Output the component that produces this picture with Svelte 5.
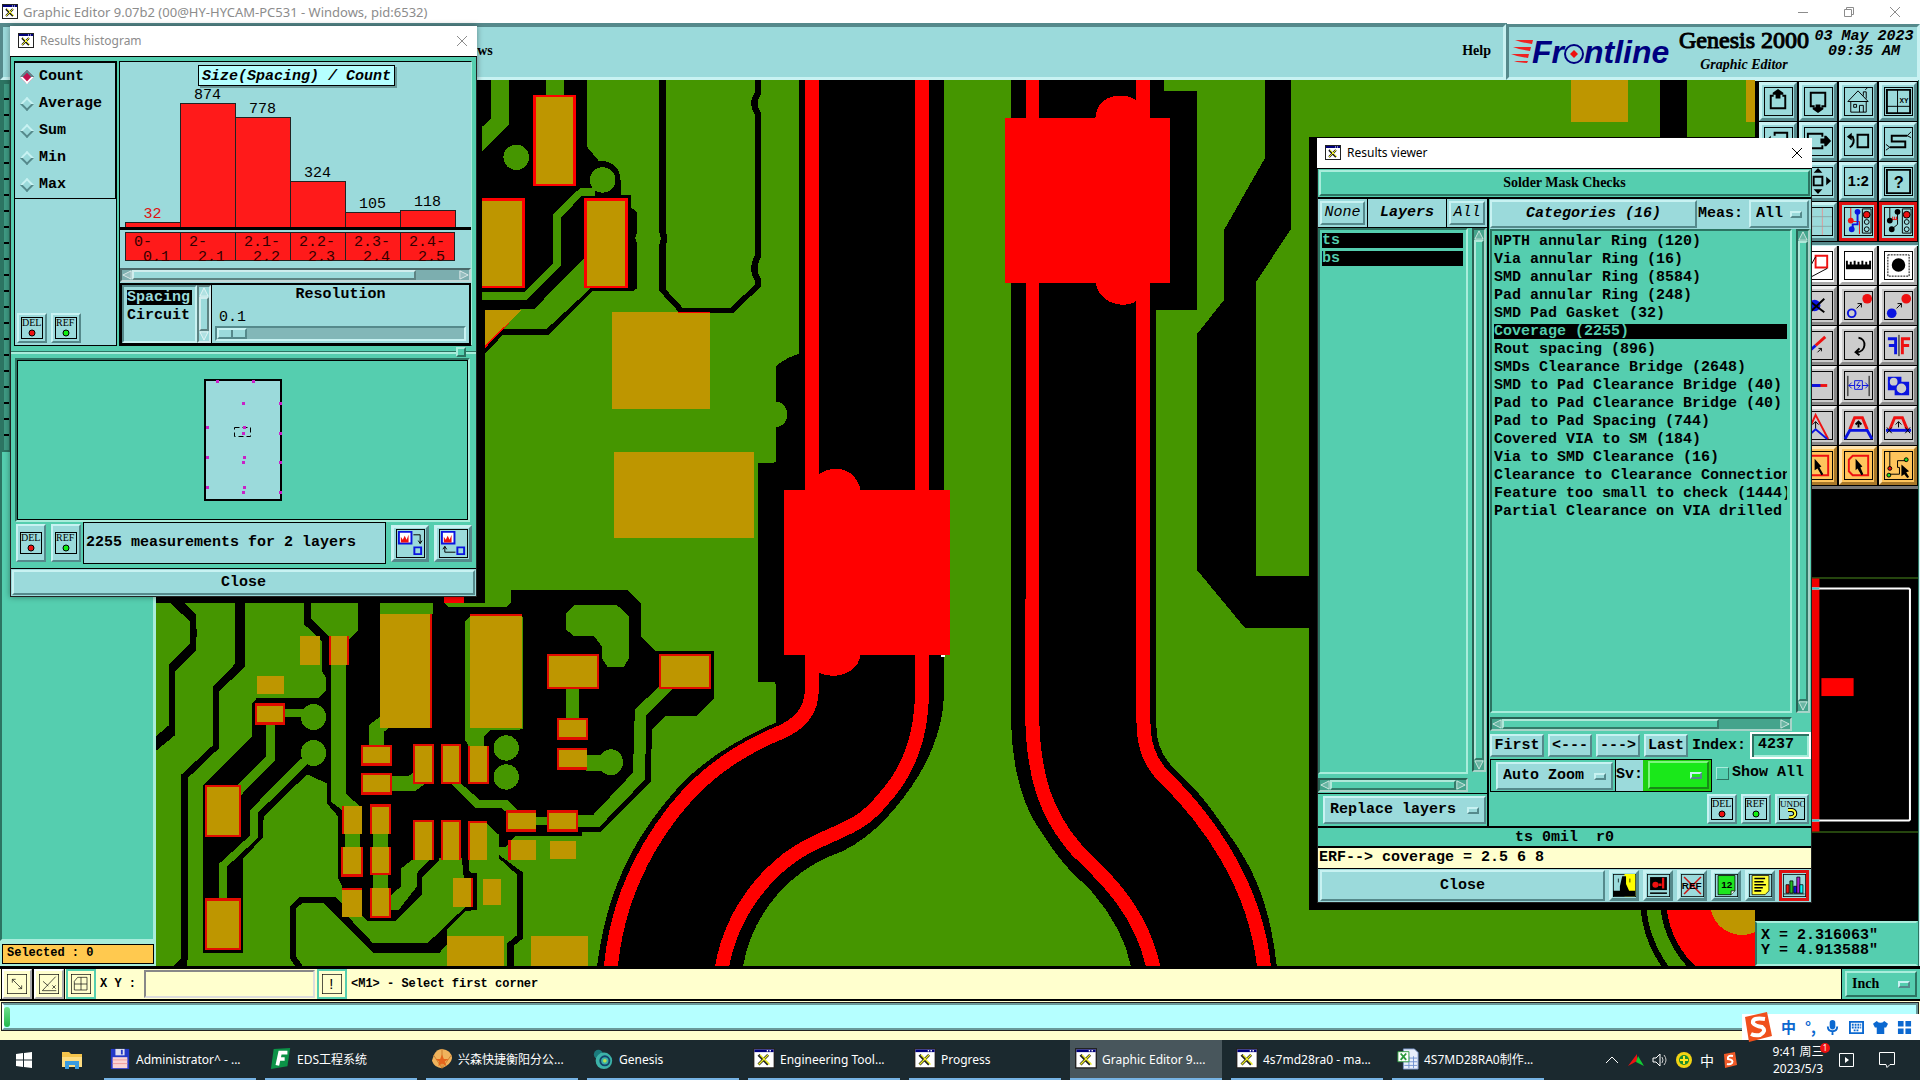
<script lang="ts">
   let mode = "Count";
   let layer = "ts";
   let category = "Coverage (2255)";
   let param = "Spacing";
   let index = "4237";
   let coords = "";
   let show_all = false;
   let resolution = 0;

   const modes = ["Count", "Average", "Sum", "Min", "Max"];
   const params = ["Spacing", "Circuit"];
   const layers = ["ts", "bs"];

   const bins = [
      { from: "0-", to: "0.1", count: 32 },
      { from: "2-", to: "2.1", count: 874 },
      { from: "2.1-", to: "2.2", count: 778 },
      { from: "2.2-", to: "2.3", count: 324 },
      { from: "2.3-", to: "2.4", count: 105 },
      { from: "2.4-", to: "2.5", count: 118 }
   ];

   const categories = [
      "NPTH annular Ring (120)",
      "Via annular Ring (16)",
      "SMD annular Ring (8584)",
      "Pad annular Ring (248)",
      "SMD Pad Gasket (32)",
      "Coverage (2255)",
      "Rout spacing (896)",
      "SMDs Clearance Bridge (2648)",
      "SMD to Pad Clearance Bridge (40)",
      "Pad to Pad Clearance Bridge (40)",
      "Pad to Pad Spacing (744)",
      "Covered VIA to SM (184)",
      "Via to SMD Clearance (16)",
      "Clearance to Clearance Connection",
      "Feature too small to check (1444)",
      "Partial Clearance on VIA drilled"
   ];

   // measurement marks on the board overview
   const marks = [
      [12, 1], [48, 1], [38, 23], [75, 23], [2, 47], [39, 47], [38, 53], [75, 53],
      [2, 77], [39, 77], [38, 82], [75, 82], [2, 107], [39, 107], [38, 112], [75, 112]
   ];

   // x, y, width, height, sides with exposed copper
   const lower_pads: [number, number, number, number, string][] = [
      [392, 138, 52, 86, ""], [467, 138, 53, 86, "rl"], [280, 258, 70, 54, ""],
      [274, 340, 79, 64, "trbl"], [601, 72, 136, 342, "r"], [835, 72, 138, 342, "t"],
      [1037, 192, 136, 105, "trbl"], [1330, 192, 136, 105, "trbl"],
      [1064, 384, 81, 65, "trbl"], [1064, 474, 78, 65, "tbl"],
      [143, 585, 95, 156, "trbl"], [143, 925, 95, 156, "trbl"],
      [551, 465, 81, 62, "trbl"], [551, 549, 81, 65, "trbl"],
      [687, 462, 55, 121, "trbl"], [760, 462, 53, 121, "trbl"], [831, 468, 55, 115, "rbl"],
      [502, 648, 51, 83, "l"], [575, 643, 56, 88, "trl"],
      [499, 771, 58, 89, "rbl"], [575, 771, 56, 84, "rbl"],
      [502, 893, 51, 87, "t"], [575, 893, 56, 91, "rbl"],
      [687, 690, 55, 120, "trl"], [760, 690, 53, 120, "trl"], [831, 693, 50, 117, "tl"],
      [930, 661, 79, 64, "tbl"], [1037, 661, 82, 64, "trbl"],
      [936, 750, 73, 60, "l"], [1045, 753, 68, 54, ""],
      [792, 864, 52, 87, "r"], [870, 867, 47, 78, ""],
      [776, 1038, 149, 92, ""], [996, 1038, 149, 92, ""]
   ];
   const upper_pads: [number, number, number, number, string][] = [
      [115, 45, 94, 273, "trbl"], [5, 355, 93, 269, "trb"], [226, 355, 96, 269, "trbl"],
      [287, 696, 214, 290, ""], [292, 1116, 305, 258, ""]
   ];

   function inner(pad: [number, number, number, number, string]) {
      const [x, y, w, h, s] = pad;
      const l = s.includes("l") ? 6 : 0;
      const r = s.includes("r") ? 6 : 0;
      const t = s.includes("t") ? 7 : 0;
      const b = s.includes("b") ? 7 : 0;
      return { x: x + l, y: y + t, width: w - l - r, height: h - t - b };
   }

   const K = "#000";
   const R = "#e11";
   const B = "#0a14e0";
   // every part: path, stroke, fill, stroke width
   type Part = [string, string, string, number];
   type Icon = { parts: Part[]; text?: string; x?: number; y?: number; size?: number };

   const icons: Record<string, Icon> = {
      up: { parts: [["M10 9H7V22H22V9H19", K, "none", 2], ["M14.500 2L20 6V8H17V12H12V8H9V6Z", K, K, 0]] },
      down: { parts: [["M11 20H7V6H22V20H18", K, "none", 2], ["M14.500 27L20 23V21H17V18H12V21H9V23Z", K, K, 0]] },
      left: { parts: [["M11 9V6H24V22H11V19", K, "none", 2], ["M2 14L7 9V12H11V17H7V19Z", K, K, 0]] },
      right: { parts: [["M19 10V7H4V22H19V19", K, "none", 2], ["M28 14.500L23 9H21V12H17V17H21V20H23Z", K, K, 0]] },
      home: { parts: [["M4 15L14.500 4L25 15H4M7 15V26H23V15M16 26V19H20V26M10 18H13V21H10ZM20 9V5H23V12M22 3L24 1", K, "none", 1]] },
      layout: { parts: [["M3 3H27V27H3Z", K, "none", 2], ["M14 3V27M3 20H27", K, "none", 1]], text: "XY", x: 16, y: 17, size: 7 },
      turn: { parts: [["M14 8H25V21H14Z", K, "none", 2], ["M6 21Q12 17 9 10L5 10", K, "none", 2], ["M3 10L8 6V14Z", K, K, 0]] },
      snake: { parts: [["M24 9L28 5M24 9L28 11M6 21L2 18M6 21L2 24", K, "none", 1], ["M24 9H8V15H22V21H6", K, "none", 2]] },
      fit: { parts: [["M10 10H19V19H10Z", K, "none", 2], ["M14.500 1L19 6H10ZM14.500 28L19 23H10ZM28 14.500L23 10V19ZM1 14.500L6 10V19Z", K, K, 0]] },
      scale: { parts: [], text: "1:2", x: 4, y: 20, size: 15 },
      help: { parts: [["M3 3H27V27H3Z", K, "none", 2]], text: "?", x: 10, y: 22, size: 17 },
      grid: { parts: [["M8 1V29M19 1V29", "#d99", "none", 1], ["M1 10H29M1 20H29", "#8aa", "none", 1]] },
      lights: {
         parts: [
            ["M7 1V13M7 15H16V28", R, "none", 1], ["M14 6V18H9V23", B, "none", 2],
            ["M4 14a3 3 0 1 0 6 0a3 3 0 1 0 -6 0", R, R, 0], ["M11 5a3 3 0 1 0 6 0a3 3 0 1 0 -6 0M5 23a3 3 0 1 0 6 0a3 3 0 1 0 -6 0", B, B, 0],
            ["M19 2H28V27H19ZM21 15.500a2.500 2.500 0 1 0 5 0a2.500 2.500 0 1 0 -5 0M21 23a2.500 2.500 0 1 0 5 0a2.500 2.500 0 1 0 -5 0", K, "none", 1],
            ["M20 8a3.500 3.500 0 1 0 7 0a3.500 3.500 0 1 0 -7 0", K, R, 1]
         ]
      },
      gauge: {
         parts: [
            ["M6 1V13M14 6V18L8 23", K, "none", 1], ["M9 13V10M11 13V10M13 13V10M8 13H14", R, "none", 1],
            ["M3 14a3 3 0 1 0 6 0a3 3 0 1 0 -6 0M11 5a3 3 0 1 0 6 0a3 3 0 1 0 -6 0M5 23a3 3 0 1 0 6 0a3 3 0 1 0 -6 0", K, K, 0],
            ["M19 2H28V27H19ZM21 15.500a2.500 2.500 0 1 0 5 0a2.500 2.500 0 1 0 -5 0M21 23a2.500 2.500 0 1 0 5 0a2.500 2.500 0 1 0 -5 0", K, "none", 1],
            ["M20 8a3.500 3.500 0 1 0 7 0a3.500 3.500 0 1 0 -7 0", K, R, 1]
         ]
      },
      corner: { parts: [["M12 5H24V17H12Z", R, "none", 2], ["M1 17L6 24V28H2", B, B, 1], ["M7 27L24 18M7 15L12 6", K, "none", 1]] },
      ruler: { parts: [["M2 19V10H4V14H6V11H8V14H10V10H12V14H14V11H16V14H18V10H20V14H22V11H24V14H26V10H28V19Z", K, K, 0]] },
      dot: { parts: [["M8 14.500a7 7 0 1 0 14 0a7 7 0 1 0 -14 0", K, K, 0], ["M4 4H26V26H4Z", K, "none", 1]] },
      cross: { parts: [["M5 15a6 6 0 1 0 12 0a6 6 0 1 0 -12 0", B, B, 0], ["M4 9L21 22M21 8L5 23", K, "none", 2]] },
      copy_ring: { parts: [["M4 23a4 4 0 1 0 8 0a4 4 0 1 0 -8 0", B, "none", 2], ["M19 8a5 5 0 1 0 10 0a5 5 0 1 0 -10 0", R, R, 0], ["M13 18L18 13M14 13H18V17", K, "none", 1]] },
      copy_dot: { parts: [["M3 23a5 5 0 1 0 10 0a5 5 0 1 0 -10 0", B, B, 0], ["M18 8a5 5 0 1 0 10 0a5 5 0 1 0 -10 0", R, R, 0], ["M13 18L18 13M14 13H18V17", K, "none", 1]] },
      line: { parts: [["M12 15L22 6", R, "none", 3], ["M3 23L12 15", B, "none", 3], ["M14 22L18 18M15 18H18V21", K, "none", 1]] },
      arc: { parts: [["M15 7C24 8 23 22 13 22M16 18L12 22L16 25", K, "none", 2]] },
      mirror: { parts: [["M4 8H12V24M5 15H12", B, "none", 3], ["M27 8H19V24M26 15H19", R, "none", 3], ["M15.500 4V26", K, "none", 1]] },
      segment: { parts: [["M2 15H24", R, "none", 3], ["M7 15H17", B, "none", 3]] },
      stretch: { parts: [["M4 5V26M26 5V26", K, "none", 1], ["M11 10H19V19H11ZM5 15H11M19 15H25M8 12L5 15L8 18M22 12L25 15L22 18M16 11L13 15H17L14 18", B, "none", 1]] },
      blocks: { parts: [["M4 6H18V11H26V25H11V20H4Z", B, B, 0], ["M6 11a4 4 0 1 0 8 0a4 4 0 1 0 -8 0M13 18a5 5 0 1 0 10 0a5 5 0 1 0 -10 0", "#ccc", "#ccc", 0]] },
      peak: { parts: [["M3 24L12 4L25 29", R, "none", 2], ["M1 29L12 19L24 29", B, "none", 2], ["M12 18V11M9 14L12 11L15 14", K, "none", 1]] },
      trapeze: { parts: [["M6 19L11 7H19L24 19", R, "none", 3], ["M1 29L6 20H24L29 29", B, "none", 3], ["M15 17V11M12 14L15 11L18 14", K, "none", 2]] },
      trapeze_cut: { parts: [["M6 19L11 7H19L24 19", R, "none", 3], ["M2 20H28", B, "none", 3], ["M15 17V11M12 14L15 11L18 14M3 17L8 23M8 17L3 23M22 17L27 23M27 17L22 23", K, "none", 1]] },
      pick_rect: { parts: [["M5 5H25V25H5Z", R, "none", 2], ["M11 8L18 16L16 17L20 24L18 25L14 18L11 20Z", K, K, 0]] },
      pick_poly: { parts: [["M9 5H25V25H9L5 21V9Z", R, "none", 2], ["M12 8L19 16L17 17L20 24L18 25L14 18L12 20Z", K, K, 0]] },
      pick_net: { parts: [["M6 1V17M22 10H14V17H16V24H6", K, "none", 1], ["M4 18a2 2 0 1 0 4 0a2 2 0 1 0 -4 0", K, R, 1], ["M21 9a2 2 0 1 0 4 0a2 2 0 1 0 -4 0M3 25a2 2 0 1 0 4 0a2 2 0 1 0 -4 0", K, "#2d2", 1], ["M18 14L26 21L23 22L26 27L24 28L21 24L18 26Z", K, K, 0]] },
      to_layer: { parts: [["M3 3H16V15H3Z", B, "#fff", 2], ["M5 14V8L7 11L9 7L11 11L13 6V14Z", R, R, 0], ["M19 19H26V26H19Z", B, "none", 2], ["M18 6H25V15M23 12L25 15L27 12", K, "none", 1]] },
      from_layer: { parts: [["M3 3H16V15H3Z", B, "#fff", 2], ["M5 14V8L7 11L9 7L11 11L13 6V14Z", R, R, 0], ["M19 19H26V26H19Z", B, "none", 2], ["M17 24H6V18M4 21L6 18L8 21", K, "none", 1]] },
      day: { parts: [["M15 0H29V29H15Z", K, "#ff0", 0], ["M0 22H29V29H0ZM12 3H17V13L21 22H9V16Z", K, K, 0], ["M7 6V11M22 6V11", K, "none", 1]] },
      plot: { parts: [["M4 4H26V21H4Z", K, K, 0], ["M7 14a4 4 0 1 0 8 0a4 4 0 1 0 -8 0", R, R, 0], ["M15 14H19M21 5V19", R, "none", 3], ["M4 25H26", K, "none", 2]] },
      no_ref: { parts: [["M4 4L26 26M26 4L4 26", "#c11", "none", 2]], text: "REF", x: 1, y: 19, size: 13 },
      pages: { parts: [["M4 2H26V22L21 27H4Z", K, "#1fe51f", 1], ["M26 22H21V27", K, "#fff", 1]], text: "12", x: 8, y: 18, size: 13 },
      notes: { parts: [["M4 2H26V22L21 27H4Z", K, "#ff3", 1], ["M7 6H21M7 10H19M7 14H22M7 18H18M7 22H16", K, "none", 2]] },
      bars: { parts: [["M4 14H8V25H4Z", K, R, 1], ["M9 9H13V25H9Z", K, "#2b2", 1], ["M14 16H18V25H14Z", K, B, 1], ["M18 4H22V25H18Z", K, "#a2c", 1], ["M22 14H26V25H22Z", K, "#0ff", 1], ["M1 26H28", K, "none", 1]] },
      diag: { parts: [["M8 8L22 22M8 13V8H13M17 22H22V17", K, "none", 1]] },
      angle: { parts: [["M5 25L25 4M5 25H26M6 11L14 18M20 17L25 22M25 17L20 22", K, "none", 1]] },
      snap: { parts: [["M10 5H24V24H5V11ZM15 5V24M5 15H24", K, "none", 1]] },
      alert: { parts: [], text: "!", x: 11, y: 23, size: 22 }
   };

   const view_tools = [
      "up", "down", "home", "layout",
      "left", "right", "turn", "snake",
      "fit", "fit", "scale", "help",
      "grid", "grid", "lights", "gauge"
   ];
   const edit_tools = [
      "corner", "corner", "ruler", "dot",
      "cross", "cross", "copy_ring", "copy_dot",
      "line", "line", "arc", "mirror",
      "segment", "segment", "stretch", "blocks",
      "peak", "peak", "trapeze", "trapeze_cut",
      "pick_rect", "pick_rect", "pick_poly", "pick_net"
   ];
   const viewer_tools = ["day", "plot", "no_ref", "pages", "notes", "bars"];

   const tasks = [
      { name: "Administrator^ - ...", kind: "floppy" },
      { name: "EDS工程系统", kind: "eds" },
      { name: "兴森快捷衡阳分公...", kind: "shell" },
      { name: "Genesis", kind: "gen" },
      { name: "Engineering Tool...", kind: "x" },
      { name: "Progress", kind: "x" },
      { name: "Graphic Editor 9....", kind: "x", active: true },
      { name: "4s7md28ra0 - ma...", kind: "x" },
      { name: "4S7MD28RA0制作...", kind: "sheet" }
   ];
</script>

{#snippet icon(name: string)}
   <svg class="icon" viewBox="0 0 30 30" aria-hidden="true">
      <rect x="0.5" y="0.5" width="29" height="29" fill="none" stroke="#000" />
      {#each icons[name].parts as [d, stroke, fill, width]}
         <path {d} {stroke} {fill} stroke-width={width} stroke-dasharray={name === "dot" && width ? "2 1" : null} />
      {/each}
      {#if icons[name].text}
         <text x={icons[name].x} y={icons[name].y} font-size={icons[name].size}>{icons[name].text}</text>
      {/if}
   </svg>
{/snippet}

{#snippet app_icon()}
   <svg class="app-icon" viewBox="0 0 16 16" aria-hidden="true">
      <rect x="0.5" y="0.5" width="15" height="14" fill="#fff" stroke="#222" />
      <rect x="1" y="1" width="14" height="2" fill="#00007b" />
      <path d="M10 2h1M12 2h1" stroke="#fff" />
      <path d="M4 5L11 12M11 5L4 12" stroke="#222" stroke-width="2" />
      <path d="M5 5L12 12M11 5L4 12" stroke="#ee2" stroke-width="1" />
   </svg>
{/snippet}

{#snippet tag(label: string)}
   <button class="tag" class:wide={label === "UNDO"} aria-label={label}>
      <svg viewBox={label === "UNDO" ? "0 0 26 22" : "0 0 22 22"} aria-hidden="true">
         <rect x="0.5" y="0.5" width={label === "UNDO" ? 25 : 21} height="21" fill="none" stroke="#000" />
         <text x="1" y="9" font-size={label === "UNDO" ? 9 : 10}>{label}</text>
         {#if label === "UNDO"}
            <path d="M9 12H13Q17 13 16 17Q14 20 10 19" fill="none" stroke="#000" stroke-width="4" />
            <path d="M9 12H13Q17 13 16 17Q14 20 10 19" fill="none" stroke="#ff3" stroke-width="2" />
         {:else}
            <circle cx="11" cy="16" r="3" fill={label === "DEL" ? "#e11" : "#1e1"} stroke="#000" />
         {/if}
      </svg>
   </button>
{/snippet}

{#snippet scrollbar(dir: string, size: number)}
   <div class="scroll {dir}">
      <svg viewBox="0 0 12 12" aria-hidden="true">
         <path d={dir === "vert" ? "M6 1L11 11H1Z" : "M1 6L11 1V11Z"} class="arrow" />
      </svg>
      <div class="track"><div class="thumb" style="flex-basis: {size}%"></div></div>
      <svg viewBox="0 0 12 12" aria-hidden="true">
         <path d={dir === "vert" ? "M6 11L11 1H1Z" : "M11 6L1 1V11Z"} class="arrow" />
      </svg>
   </div>
{/snippet}

{#snippet close_mark()}
   <svg class="mark" viewBox="0 0 12 12" aria-hidden="true"><path d="M1 1L11 11M11 1L1 11" fill="none" stroke="currentColor" /></svg>
{/snippet}

<div class="screen">
   <header class="titlebar">
      {@render app_icon()}
      <span class="caption">Graphic Editor 9.07b2 (00@HY-HYCAM-PC531 - Windows, pid:6532)</span>
      <button aria-label="Minimize"><svg class="mark" viewBox="0 0 12 12"><path d="M1 6.500H11" stroke="currentColor" /></svg></button>
      <button aria-label="Restore"><svg class="mark" viewBox="0 0 12 12"><path d="M1.500 3.500H8.500V10.500H1.500ZM3.500 3.500V1.500H10.500V8.500H8.500" fill="none" stroke="currentColor" /></svg></button>
      <button aria-label="Exit">{@render close_mark()}</button>
   </header>

   <div class="top">
      <nav class="menubar">
         <button>Windows</button>
         <button>Help</button>
      </nav>
      <div class="brand">
         <svg class="logo" viewBox="0 0 164 34" role="img" aria-label="Frontline">
            <path d="M4 4H22L21 8L10 6ZM2 11H20L19 15L8 13ZM0 18H18L17 22L6 20ZM3 25H17L16 27L6 26Z" fill="#e22" />
            <text x="21" y="27" font-size="32">Fr</text>
            <text x="73" y="27" font-size="32">ntline</text>
            <circle cx="63" cy="18" r="9" fill="none" stroke="#000080" stroke-width="2" />
            <path d="M63 14L67 18L63 22L59 18Z" fill="#e11" />
         </svg>
         <div class="product">
            <strong>Genesis 2000</strong>
            <em>Graphic Editor</em>
         </div>
         <div class="date">03 May 2023<br />09:35 AM</div>
      </div>
   </div>

   <main>
      <aside class="left">
         <div class="fill"><div class="strip"></div></div>
         <div class="selected">Selected : 0</div>
      </aside>

      <svg class="board" viewBox="156 80 1599 886" preserveAspectRatio="xMidYMid slice" shape-rendering="crispEdges" aria-label="Board">
         <rect x="156" y="80" width="1599" height="886" fill="#459600" />
         <rect x="156" y="80" width="329" height="523" />
         <path d="M1265 80H1291V229L1256 282V576H1310V628H1245L1197 570V334L1224 300V230L1265 158Z" />
         <path d="M1660 80H1687V140H1660Z" />
         <path class="gold" d="M1571 80h57v42h-57zM1746 80h10v42h-10z" />
         <circle cx="1760" cy="898" r="120" />
         <circle cx="1760" cy="898" r="114" fill="#459600" />
         <circle cx="1760" cy="898" r="100" />
         <circle cx="1760" cy="898" r="94" fill="#f00" />
         <circle cx="1742" cy="903" r="32" class="gold" />

         <!-- connector area, top -->
         <g transform="translate(480 80) scale(0.4592 0.3333)">
            <path d="M5 0H233V200L258 242C290 240 306 270 306 300V345H329V382L342 397V455L338 475L342 492V625L335 632H245L150 765H50L5 828Z" />
            <path class="green" d="M24 0H63V135L5 215V140L24 117ZM144 0H183V50H144Z" />
            <ellipse class="green" cx="79" cy="232" rx="28" ry="38" />
            <ellipse class="green" cx="267" cy="300" rx="28" ry="38" />
            <path class="green" d="M250 324H218L160 402V550L96 636H5V659H102L176 556V412L222 348H250Z" />
            <path class="green" d="M118 687L234 525L245 620L145 747H50L88 688Z" />
            <path fill="#f00" d="M11 690H88L50 750L11 804Z" />
            <path class="gold" d="M11 690H90L11 797Z" />
            <path d="M397 0V455Q404 475 397 495V630L438 691H549L605 617V600Q590 565 605 530V100Q590 68 606 38V0" fill="none" stroke="#000" stroke-width="14" />
            {#each upper_pads as pad}
               {#if pad[4]}<rect x={pad[0]} y={pad[1]} width={pad[2]} height={pad[3]} fill="#f00" />{/if}
               <rect class="gold" {...inner(pad)} />
            {/each}
            <path fill="#f00" d="M431 695H501V699H431Z" />
            <path d="M695 0H1010V1562H605V1149H638L645 1145V858Q670 830 695 822Z" />
            <ellipse class="green" cx="645" cy="1003" rx="24" ry="38" />
            <path d="M1156 0H1490V33H1561V690H1472V1562H1156Z" />
            <path fill="#f00" d="M708 0H738V1240H708ZM947 0H978V1240H947ZM1189 0H1217V1562H1189ZM1429 0H1459V1562H1429ZM1143 114H1503V609H1143ZM662 1230H1024V1725H662Z" />
            <path fill="#f00" d="M1340 114C1345 30 1415 40 1429 62V120ZM1340 606C1350 680 1410 685 1430 662V600ZM738 1182C770 1150 820 1165 829 1232H738Z" />
         </g>

         <!-- differential pairs -->
         <g transform="translate(590 600) scale(0.4592 0.3333)">
            <path d="M366 -2V245H400L405 252V368Q250 460 175 590Q100 710 60 850Q30 950 15 1102H333Q345 1000 390 915Q440 820 520 770C600 735 660 640 700 560C755 450 771 350 771 270V-2Z" />
            <path d="M917 -2V370C920 500 940 620 985 700C1030 800 1060 830 1090 870C1140 950 1170 1030 1178 1102H1496C1480 900 1440 800 1400 720C1350 620 1330 580 1275 510C1245 470 1233 430 1233 370V-2Z" />
            <g class="copper">
               <path d="M483 150V270Q483 360 410 400C270 480 190 600 130 740C80 860 55 970 45 1104" />
               <path d="M723 150V270C723 420 690 520 640 595C590 680 560 680 480 735C400 790 310 920 287 1104" />
               <path d="M963 -2V350C965 520 990 640 1060 750C1120 830 1200 930 1227 1104" />
               <path d="M1205 -2V350C1205 430 1215 480 1250 530C1340 650 1450 850 1468 1104" />
            </g>
            <path fill="#f00" d="M422 -5H784V165H422ZM497 160H590C585 225 530 240 497 218Z" />
            <path fill="#fff" d="M765 165h8v6h-8z" />
         </g>

         <!-- component area, bottom left -->
         <g transform="translate(150 590) scale(0.3827 0.3333)">
            <path d="M53 39H91L120 72L122 130L120 183L65 244V436L10 488V445L50 405V222L105 160V95ZM222 30H248V230L180 305V475L98 565V1110L95 1130H60L81 1105V555L165 465V290L222 222Z" />
            <path d="M403 39H421V85L467 138L520 150L544 122V0H1248L1283 40V138L1321 183H1474V325L1427 378H1348L1312 418L1308 575L1178 725H1130L1128 738H955L930 770H912V805L835 850H855V960L825 963L775 1020V1065L755 1090H585L455 940H397L382 955V1100L400 1130H380L365 1105V950L390 922H485L502 940V890L492 865V680L462 640V580L410 553L297 680L294 745L243 805V1088H139V585L267 440V340L280 323H440L460 300V262L450 245V155L403 103Z" />
            <g class="green">
               <path d="M770 39H875V0H942V38L932 50H780ZM601 39H740V72H601ZM823 95L835 80H975V415L965 420H890L873 440V468H833L823 450ZM601 380L573 405V467H612V425L627 412Z" />
               <path d="M1110 45H1220L1252 80V205L1238 230H1195L1181 205V170L1160 138H1107L1087 118V70Z" />
               <path d="M473 222H512V612L550 650V660H502L473 635ZM350 358H410V380H350ZM303 400H327V510L238 615H220V595L303 500Z" />
               <path d="M395 505L260 662V738L180 822V930H201V830L281 745V670L412 522ZM630 558H675L700 540L720 580L695 602H630ZM785 580H812L862 630H935L965 665H930L918 654H850ZM1005 682H1045V706H1005Z" />
               <path d="M1118 676H1157L1262 548L1267 358L1340 280H1380L1296 376L1294 568L1175 710H1118ZM1087 290H1121V392H1087ZM1138 495H1190V542H1138ZM510 728H549V775H510ZM583 728H622V775H583ZM583 852H622V896H583Z" />
               <path d="M630 915L657 888V835L690 805H735L697 850V890L650 960H630ZM553 975L567 992H642L712 912V862L755 812V805H815L820 865H792V950H825L775 1005L725 1060H583L505 965ZM880 700L912 735V805L960 852V1035L933 1060V1130H775V1025L825 963H855V850L835 845L833 805H880Z" />
               <ellipse cx="427" cy="381" rx="33" ry="39" />
               <ellipse cx="427" cy="489" rx="33" ry="39" />
               <ellipse cx="931" cy="474" rx="33" ry="38" />
               <ellipse cx="931" cy="561" rx="33" ry="38" />
               <ellipse cx="1204" cy="517" rx="32" ry="39" />
            </g>
            <path d="M912 795L975 848V1045L950 1068V1130H933V1060L960 1035V855L912 805Z" />
            <path fill="#f00" d="M768 10H821V39H768Z" />
            {#each lower_pads as pad}
               {#if pad[4]}<rect x={pad[0]} y={pad[1]} width={pad[2]} height={pad[3]} fill="#e10c00" />{/if}
               <rect class="gold" {...inner(pad)} />
            {/each}
         </g>
         <rect x="1309" y="137" width="446" height="773" />
      </svg>

      <aside class="right">
         <div class="tools">
            {#each view_tools as name, i}
               <button class="tool" class:lit={i > 13} aria-label={name}>{@render icon(name)}</button>
            {/each}
         </div>
         <div class="tools grey">
            {#each edit_tools as name, i}
               <button class="tool" class:white={i < 4} class:orange={i > 19} aria-label={name}>{@render icon(name)}</button>
            {/each}
         </div>
         <svg class="overview" viewBox="0 0 162 434" preserveAspectRatio="none" aria-label="Overview">
            <rect width="162" height="434" />
            <path d="M0 89.500H162M0 344.500H162" stroke="#4a8a1c" />
            <path d="M40 90H64V344H40Z" fill="#e00" />
            <path d="M30 100H153L154 101V332L153 333H30" fill="none" stroke="#fff" stroke-width="2" />
            <path d="M50 100H64M50 333H64" stroke="#3cc" stroke-width="2" />
            <rect x="66" y="190" width="32" height="18" fill="#f00" />
         </svg>
         <div class="coords">X = 2.316063"<br />Y = 4.913588"</div>
      </aside>
   </main>

   <div class="prompt">
      <button class="square" aria-label="Stretch">{@render icon("diag")}</button>
      <button class="square" aria-label="Angle">{@render icon("angle")}</button>
      <button class="square framed" aria-label="Snap">{@render icon("snap")}</button>
      <label for="xy">X Y :</label>
      <input id="xy" bind:value={coords} />
      <button class="square framed" aria-label="Alert">{@render icon("alert")}</button>
      <p>&lt;M1&gt; - Select first corner</p>
      <div class="unit">
         <div class="option teal"><select aria-label="Units"><option>Inch</option></select></div>
      </div>
   </div>
   <div class="status"><div><span class="level"></span></div></div>

   <footer class="taskbar">
      <button class="start" aria-label="Start">
         <svg viewBox="0 0 16 16"><path d="M0 2L7 1V7.500H0ZM8 1L16 0V7.500H8ZM0 8.500H7V15L0 14ZM8 8.500H16V16L8 15Z" fill="#fff" /></svg>
      </button>
      <button class="start" aria-label="Explorer">
         <svg class="folder" viewBox="0 0 22 20"><path d="M1 2H8L10 4H21V17H1Z" fill="#f5c44c" /><path d="M1 7H21V17H1Z" fill="#fddc82" /><path d="M4 11H18V19H14V15H8V19H4Z" fill="#3a9be0" /></svg>
      </button>
      <div class="tasks">
         {#each tasks as task}
            <button class="task" class:active={task.active}>
               {#if task.kind === "x"}
                  {@render app_icon()}
               {:else}
                  <svg class="app-icon" viewBox="0 0 24 24" aria-hidden="true">
                     {#if task.kind === "floppy"}
                        <path d="M2 1H22V23H2Z" fill="#2338c8" />
                        <path d="M7 1H17V8H7Z" fill="#dde" /><path d="M13 2H15V7H13Z" fill="#2338c8" />
                        <path d="M4 10H20V22H4Z" fill="#fbd4d4" /><path d="M4 13H20M4 17H20" stroke="#e99" />
                     {:else if task.kind === "eds"}
                        <path d="M4 1L22 0L19 20L1 23Z" fill="#0c9247" />
                        <path d="M8 19L11 5H19M9 12H16" fill="none" stroke="#fff" stroke-width="4" />
                     {:else if task.kind === "shell"}
                        <path d="M3 8Q6 1 12 1Q22 2 23 11Q22 18 12 22Q4 22 1 14Z" fill="#f0b35c" />
                        <path d="M12 22L3 8M12 22L12 1M12 22L22 8" stroke="#c87a2a" />
                        <path d="M12 7L14 12L19 12L15 15L17 20L12 17L8 20L9 15L5 12H10Z" fill="#e4641c" />
                     {:else if task.kind === "gen"}
                        <circle cx="7" cy="7" r="5" fill="#1b7a7c" />
                        <circle cx="13" cy="14" r="9" fill="#3cb2a8" />
                        <circle cx="14" cy="14" r="5" fill="none" stroke="#12436b" stroke-width="2" />
                        <circle cx="14" cy="14" r="2" fill="#b8e04c" />
                     {:else}
                        <path d="M7 1H19L23 5V23H7Z" fill="#e8eefb" stroke="#7a94c8" />
                        <path d="M8 11H22M8 15H22M8 19H22M13 9V22M18 9V22" stroke="#6f8fd0" />
                        <path d="M1 4H13V15H1Z" fill="#fff" stroke="#2a9a3c" />
                        <path d="M4 6L10 13M10 6L4 13" stroke="#2a9a3c" stroke-width="2" />
                     {/if}
                  </svg>
               {/if}
               <span>{task.name}</span>
            </button>
         {/each}
      </div>
      <div class="tray">
         <svg viewBox="0 0 16 16"><path d="M2 11L8 5L14 11" fill="none" stroke="#fff" /></svg>
         <svg viewBox="0 0 16 16"><path d="M0 14L9 2V9Z" fill="#e11" /><path d="M10 4L16 14L8 10Z" fill="#1c3" /></svg>
         <svg viewBox="0 0 16 16"><path d="M1 6H4L8 2V14L4 10H1Z" fill="none" stroke="#fff" /><path d="M10 5Q12 8 10 11M12 3Q16 8 12 13" fill="none" stroke="#ccc" /></svg>
         <svg viewBox="0 0 16 16"><circle cx="8" cy="8" r="8" fill="#f2d313" /><circle cx="8" cy="8" r="5" fill="#1c8a2c" /><path d="M8 4V12M4 8H12" stroke="#ffe620" stroke-width="2" /></svg>
         <span>中</span>
         <svg viewBox="0 0 16 16"><path d="M2 2L13 0L15 13L3 16Z" fill="#f05a28" /><path d="M11 4Q5 3 6 7Q12 8 10 11Q8 13 5 12" fill="none" stroke="#fff" stroke-width="2" /></svg>
      </div>
      <div class="clock">9:41 周三<br />2023/5/3<span class="count">1</span></div>
      <svg class="sys" viewBox="0 0 18 18"><path d="M1.500 2.500H15.500V15.500H1.500Z" fill="none" stroke="#fff" /><path d="M7 6L11 9L7 12Z" fill="#fff" /></svg>
      <svg class="sys" viewBox="0 0 18 18"><path d="M1.500 1.500H16.500V13.500H12L9 16.500L8 13.500H1.500Z" fill="none" stroke="#fff" /></svg>
   </footer>

   <div class="ime">
      <svg class="sogou" viewBox="0 0 30 30"><path d="M3 5L25 0L30 24L7 30Z" fill="#f0501c" /><path d="M23 7Q10 5 11 11Q13 14 20 15Q25 19 18 23Q13 24 9 22" fill="none" stroke="#fff" stroke-width="4" /></svg>
      <span>中</span>
      <span>°,</span>
      <svg viewBox="0 0 16 16"><rect x="5" y="0" width="6" height="10" rx="3" /><path d="M3 7Q3 12 8 12Q13 12 13 7M8 12V16" fill="none" stroke="#0b68d0" stroke-width="2" /></svg>
      <svg viewBox="0 0 16 16"><path d="M1 2H15V14H1Z" fill="none" stroke="#0b68d0" stroke-width="2" /><path d="M3 5H13M3 8H13M5 11H11" stroke="#0b68d0" stroke-width="2" stroke-dasharray="2 1" /></svg>
      <svg viewBox="0 0 16 16"><path d="M4 1Q8 5 12 1L16 4L14 8H12V15H4V8H2L0 4Z" /></svg>
      <svg viewBox="0 0 16 16"><path d="M1 1H7V7H1ZM9 1H15V7H9ZM1 9H7V15H1ZM9 9H15V15H9Z" /></svg>
   </div>

   <section class="window histogram">
      <div class="window-title muted">
         {@render app_icon()}
         <span>Results histogram</span>
         <button aria-label="Close window">{@render close_mark()}</button>
      </div>
      <div class="hist-top">
         <div class="side">
            <div class="modes">
               {#each modes as m}
                  <label><input type="radio" name="mode" value={m} bind:group={mode} />{m}</label>
               {/each}
            </div>
            <div class="tags">{@render tag("DEL")}{@render tag("REF")}</div>
         </div>
         <div class="chart-side">
            <div class="chart">
               <div class="chart-title">Size(Spacing) / Count</div>
               <div class="bars">
                  {#each bins as bin, i}
                     <div class="bin">
                        <span class:hot={i === 0}>{bin.count}</span>
                        <div class="bar" style="height: {Math.round(bin.count * 0.142)}px"></div>
                     </div>
                  {/each}
               </div>
               <div class="ranges">
                  {#each bins as bin}
                     <div><span>{bin.from}</span><span>{bin.to}</span></div>
                  {/each}
               </div>
            </div>
            {@render scrollbar("horiz", 87)}
            <div class="options">
               <div class="list params">
                  {#each params as p}
                     <button class:picked={p === param} on:click={() => param = p}>{p}</button>
                  {/each}
               </div>
               {@render scrollbar("vert", 100)}
               <div class="resolution">
                  <label for="resolution">Resolution</label>
                  <output for="resolution">0.1</output>
                  <input id="resolution" type="range" bind:value={resolution} />
               </div>
            </div>
         </div>
      </div>
      <div class="sash"><span></span></div>
      <div class="map">
         <svg viewBox="0 0 78 122" aria-label="Measurement map">
            <rect x="1" y="1" width="76" height="120" fill="#9bdadb" stroke="#000" stroke-width="2" />
            <rect x="30.500" y="48.500" width="16" height="9" fill="none" stroke="#000" stroke-dasharray="5 3" />
            {#each marks as [x, y]}
               <rect {x} {y} width="3" height="3" fill="#c822c8" />
            {/each}
         </svg>
      </div>
      <div class="summary">
         {@render tag("DEL")}
         {@render tag("REF")}
         <p>2255 measurements for 2 layers</p>
         <button class="tool big" aria-label="Copy to layer">{@render icon("to_layer")}</button>
         <button class="tool big" aria-label="Copy from layer">{@render icon("from_layer")}</button>
      </div>
      <div class="close-row"><button class="push">Close</button></div>
   </section>

   <section class="window viewer">
      <div class="window-title">
         {@render app_icon()}
         <span>Results viewer</span>
         <button aria-label="Close window">{@render close_mark()}</button>
      </div>
      <h2>Solder Mask Checks</h2>
      <div class="columns">
         <div class="layers">
            <div class="layer-head">
               <button class="push">None</button>
               <strong>Layers</strong>
               <button class="push">All</button>
            </div>
            <div class="pane">
               <div class="pane-main">
                  <div class="list">
                     {#each layers as l}
                        <button class="picked" on:click={() => layer = l}>{l}</button>
                     {/each}
                  </div>
                  {@render scrollbar("horiz", 100)}
               </div>
               {@render scrollbar("vert", 100)}
            </div>
            <div class="replace">
               <div class="option"><select aria-label="Layer action"><option>Replace layers</option></select></div>
            </div>
         </div>
         <div class="cats">
            <div class="cat-head">
               <button class="push">Categories (16)</button>
               <label for="meas">Meas:</label>
               <div class="option"><select id="meas"><option>All</option></select></div>
            </div>
            <div class="pane">
               <div class="pane-main">
                  <div class="list">
                     {#each categories as c}
                        <button class:picked={c === category} on:click={() => category = c}>{c}</button>
                     {/each}
                  </div>
                  {@render scrollbar("horiz", 78)}
               </div>
               {@render scrollbar("vert", 100)}
            </div>
            <div class="step-row">
               <button class="push">First</button>
               <button class="push">&lt;---</button>
               <button class="push">---&gt;</button>
               <button class="push">Last</button>
               <label for="index">Index:</label>
               <input id="index" bind:value={index} />
            </div>
            <div class="zoom-row">
               <div class="boxed"><div class="option"><select aria-label="Zoom"><option>Auto Zoom</option></select></div></div>
               <div class="boxed sv">
                  <label for="sv">Sv:</label>
                  <div class="swatch"><div class="option lime"><select id="sv"><option></option></select></div></div>
               </div>
               <label class="check"><input type="checkbox" bind:checked={show_all} />Show All</label>
            </div>
            <div class="tags right-tags">{@render tag("DEL")}{@render tag("REF")}{@render tag("UNDO")}</div>
         </div>
      </div>
      <p class="info">ts 0mil&nbsp; r0</p>
      <p class="erf">ERF--&gt; coverage = 2.5 6 8</p>
      <div class="viewer-foot">
         <button class="push">Close</button>
         {#each viewer_tools as name}
            <button class="tool" class:lit={name === "bars"} aria-label={name}>{@render icon(name)}</button>
         {/each}
      </div>
   </section>
</div>

<style>
   :global(body) {
      margin: 0;
      overflow: hidden;
   }

   .screen {
      --light: #9bdadb;
      --light-hi: #c8f2f2;
      --light-lo: #55898b;
      --teal: #55ceaf;
      --teal-hi: #a8eddb;
      --teal-lo: #2c7462;
      --cream: #ffffce;
      position: relative;
      display: flex;
      flex-direction: column;
      height: 100vh;
      font: bold 15px/18px "Liberation Mono", monospace;
      color: #000;
      background: #000;
   }

   .screen :is(div, button, input, select, p, h2, label, section, svg, span) {
      box-sizing: border-box;
   }

   button, input, select {
      font: inherit;
      color: inherit;
      margin: 0;
      padding: 0;
      border: 0;
      background: none;
      border-radius: 0;
      outline: 0;
   }

   p, h2 {
      margin: 0;
   }

   svg {
      display: block;
      flex: none;
   }

   svg text {
      font-family: "Liberation Serif", serif;
      font-weight: normal;
   }

   .icon text {
      font-family: "Liberation Sans", sans-serif;
      font-weight: bold;
   }

   .green {
      fill: #459600;
   }

   .gold {
      fill: #be9600;
   }

   .copper path {
      fill: none;
      stroke: #f00;
      stroke-width: 14;
      vector-effect: non-scaling-stroke;
   }

   .app-icon {
      width: 16px;
      height: 16px;
   }

   .mark {
      width: 12px;
      height: 12px;
   }

   .titlebar {
      display: flex;
      align-items: center;
      flex: none;
      height: 24px;
      padding: 0 19px 0 2px;
      gap: 5px;
      background: #fff;
      color: #8c8c8c;
      font: 13px/18px "Noto Sans", "Noto Sans CJK SC", sans-serif;
   }

   .titlebar .caption {
      flex: 1;
   }

   .titlebar button {
      width: 41px;
      display: grid;
      place-items: center end;
   }

   .top {
      display: flex;
      flex: none;
      height: 56px;
      font: bold 14px/18px "Liberation Serif", serif;
   }

   .menubar {
      flex: 1;
      display: flex;
      align-items: center;
      justify-content: space-between;
      padding: 0 12px 2px 434px;
      background: var(--light);
      border: 3px solid;
      border-color: var(--light-lo) var(--light-hi) var(--light-hi) var(--light-lo);
      outline: 1px solid var(--light-lo);
   }

   .brand {
      display: flex;
      width: 414px;
      background: var(--light);
      border: 3px solid;
      border-color: var(--light-lo) var(--light-hi) var(--light-hi) var(--light-lo);
   }

   .logo {
      width: 164px;
      height: 34px;
      margin: 9px 0 0 2px;
      overflow: visible;
   }

   .logo text {
      font-family: "Liberation Sans", sans-serif;
      font-weight: bold;
      font-style: italic;
      fill: #000080;
   }

   .product {
      display: flex;
      flex-direction: column;
      align-items: center;
      width: 138px;
      white-space: nowrap;
   }

   .product strong {
      font: 24px/26px "Liberation Serif", serif;
      -webkit-text-stroke: 1px #000;
   }

   .product em {
      line-height: 24px;
   }

   .date {
      flex: 1;
      padding: 2px 2px 0 0;
      text-align: center;
      font: italic bold 15px/15px "Liberation Mono", monospace;
      white-space: nowrap;
   }

   main {
      flex: 1;
      display: grid;
      grid-template-columns: 156px 1fr 165px;
      grid-template-rows: minmax(0, 1fr);
      min-height: 0;
   }

   .left {
      display: flex;
      flex-direction: column;
      gap: 3px;
      padding: 0 1px 1px 0;
      background: var(--teal-hi);
   }

   .left .fill {
      flex: 1;
      background: var(--teal);
      border: 2px solid;
      border-color: var(--teal-lo) var(--teal-hi) var(--teal-hi) var(--teal-lo);
   }

   .strip {
      width: 9px;
      height: 370px;
      background: repeating-linear-gradient(#3f9a83 0 14px, #000 14px 16px);
      border: 2px solid var(--teal-lo);
   }

   .selected {
      height: 20px;
      padding-left: 4px;
      margin: 0 1px 1px 2px;
      border: 1px solid #000;
      background: #ffc94f;
      font: bold 12px/17px "Liberation Mono", monospace;
   }

   .board {
      width: 100%;
      height: 100%;
      min-height: 0;
   }

   .right {
      display: flex;
      flex-direction: column;
      background: var(--teal-lo);
      padding-right: 1px;
      border-right: 1px solid var(--light-hi);
   }

   .tools {
      display: grid;
      grid-template-columns: repeat(4, 40px);
      justify-content: end;
      padding-top: 1px;
      background: #000;
      border-top: 1px solid var(--light-hi);
      border-bottom: 3px solid var(--light-lo);
   }

   .tools.grey {
      padding-top: 0;
      border-bottom-color: #777;
   }

   .tool {
      width: 38px;
      height: 39px;
      margin: 0 1px 1px;
      display: grid;
      place-items: center;
      background: var(--light);
      border: 3px solid;
      border-color: var(--light-hi) var(--light-lo) var(--light-lo) var(--light-hi);
   }

   .tool .icon {
      width: 29px;
      height: 29px;
   }

   .grey .tool {
      background: #ccc;
      border-color: #eee #888 #888 #eee;
   }

   .grey .tool.white {
      background: #fff;
      border-color: #fff #aaa #aaa #fff;
   }

   .grey .tool.orange {
      background: #ffc55c;
      border-color: #ffe3ad #a8782a #a8782a #ffe3ad;
   }

   .tool.lit {
      border-color: #d11;
   }

   .overview {
      flex: 1;
      width: 100%;
      min-height: 0;
   }

   .coords {
      padding: 5px 0 6px 4px;
      background: var(--teal);
      border: 2px solid;
      border-color: var(--teal-hi) var(--teal) var(--teal-hi) var(--teal-lo);
      font-size: 15px;
      line-height: 15px;
   }

   .prompt {
      display: flex;
      align-items: center;
      flex: none;
      height: 35px;
      padding-left: 2px;
      gap: 2px;
      background: var(--cream);
      border-top: 3px solid #000;
      border-bottom: 2px solid #000;
      font-size: 12px;
   }

   .prompt label {
      width: 44px;
      padding-left: 2px;
   }

   .prompt input {
      width: 171px;
      height: 28px;
      border: 2px solid;
      border-color: #888 #ddd #ddd #888;
   }

   .prompt p {
      flex: 1;
      padding-left: 2px;
   }

   .square {
      width: 30px;
      height: 30px;
      display: grid;
      place-items: center;
      border: 2px solid;
      border-color: #fff #aaa #aaa #fff;
      outline: 1px solid #000;
   }

   .square.framed {
      outline: 2px solid var(--teal);
      outline-offset: -2px;
   }

   .square .icon {
      width: 20px;
      height: 22px;
   }

   .square .icon text {
      font-weight: normal;
   }

   .unit {
      padding: 2px 3px;
      background: var(--teal);
      border-left: 1px solid #000;
   }

   .unit .option {
      width: 72px;
      height: 26px;
      font-size: 14px;
   }

   .status {
      flex: none;
      height: 39px;
      padding: 2px 2px 10px;
      background: var(--cream);
   }

   .status div {
      height: 100%;
      background: #b5ffff;
      border: 2px solid;
      border-color: #6a9999 #6a9999 #6a9999 #fff;
      outline: 1px solid #222;
   }

   .level {
      display: block;
      width: 6px;
      height: 20px;
      margin-top: 2px;
      border-radius: 3px;
      background: linear-gradient(#6fe08c, #22b84c);
   }

   .taskbar {
      display: flex;
      flex: none;
      height: 40px;
      background: #1b292f;
      color: #fff;
      font: 12px/17px "Noto Sans", "Noto Sans CJK SC", sans-serif;
   }

   .start {
      width: 48px;
      display: grid;
      place-items: center;
   }

   .start svg {
      width: 16px;
      height: 16px;
   }

   .start svg.folder {
      width: 22px;
      height: 20px;
   }

   .tasks {
      flex: 1;
      display: flex;
      gap: 9px;
      padding-left: 8px;
   }

   .task {
      width: 152px;
      display: flex;
      align-items: center;
      gap: 5px;
      padding: 0 5px;
      border-bottom: 2px solid #76b3e4;
      white-space: nowrap;
   }

   .task .app-icon {
      width: 22px;
      height: 22px;
   }

   .task.active {
      background: #48565c;
   }

   .tray {
      display: flex;
      align-items: center;
      gap: 8px;
      padding-right: 28px;
      font-size: 14px;
   }

   .tray svg {
      width: 16px;
      height: 16px;
   }

   .clock {
      position: relative;
      width: 64px;
      padding-top: 3px;
      text-align: center;
   }

   .clock .count {
      position: absolute;
      top: 3px;
      right: 0;
      width: 10px;
      height: 10px;
      border-radius: 5px;
      background: #e11;
      font-size: 8px;
      line-height: 10px;
   }

   .sys {
      width: 18px;
      height: 18px;
      margin: 11px 24px 0 0;
   }

   .clock + .sys {
      margin-left: 8px;
      margin-right: 22px;
   }

   .ime {
      position: absolute;
      right: 0;
      bottom: 40px;
      display: flex;
      align-items: center;
      gap: 9px;
      width: 178px;
      height: 26px;
      background: #fff;
      color: #0b68d0;
      font: bold 15px/20px "Noto Sans CJK SC", sans-serif;
   }

   .ime svg {
      width: 15px;
      height: 15px;
      fill: #0b68d0;
   }

   .ime .sogou {
      width: 30px;
      height: 30px;
   }

   .window {
      position: absolute;
      display: flex;
      flex-direction: column;
      background: var(--teal);
      border: 1px solid #222;
      border-top: 0;
   }

   .histogram {
      left: 10px;
      top: 26px;
      width: 467px;
      box-shadow: 0 0 6px #0006;
   }

   .viewer {
      left: 1317px;
      top: 138px;
      width: 495px;
   }

   .window-title {
      display: flex;
      align-items: center;
      gap: 6px;
      height: 31px;
      padding: 0 9px 0 8px;
      margin: 0 -1px;
      background: #fff;
      border-bottom: 1px solid #000;
      font: 12px/18px "Noto Sans", sans-serif;
   }

   .window-title.muted {
      color: #8c8c8c;
   }

   .window-title span {
      flex: 1;
   }

   .push {
      background: var(--light);
      border: 2px solid;
      border-color: var(--light-hi) var(--light-lo) var(--light-lo) var(--light-hi);
      white-space: nowrap;
   }

   .hist-top {
      display: flex;
      gap: 2px;
      height: 289px;
      padding: 4px 4px 0 3px;
   }

   .side {
      display: flex;
      flex-direction: column;
      justify-content: space-between;
      width: 103px;
      background: var(--light);
      border: 1px solid #000;
   }

   .modes {
      padding: 0 0 0 7px;
      border: 1px solid #000;
      border-width: 1px 1px 1px 0;
   }

   .modes label {
      display: flex;
      align-items: center;
      gap: 7px;
      height: 27px;
   }

   .modes input {
      appearance: none;
      width: 10px;
      height: 10px;
      border: 2px solid;
      border-color: var(--light-hi) var(--light-lo) var(--light-lo) var(--light-hi);
      transform: rotate(45deg);
   }

   .modes input:checked {
      background: #c0104c;
      border-color: var(--light-lo) #fff #fff var(--light-lo);
   }

   .tags {
      display: flex;
      gap: 4px;
      padding: 2px;
   }

   .tag {
      width: 30px;
      height: 30px;
      display: grid;
      place-items: center;
      background: var(--light);
      border: 2px solid;
      border-color: var(--light-hi) var(--light-lo) var(--light-lo) var(--light-hi);
   }

   .tag svg {
      width: 22px;
      height: 22px;
   }

   .tag.wide {
      width: 34px;
   }

   .tag.wide svg {
      width: 26px;
   }

   .chart-side {
      flex: 1;
      display: flex;
      flex-direction: column;
      border: 1px solid #000;
      border-right-color: var(--teal-hi);
      background: var(--light);
   }

   .chart {
      position: relative;
      height: 206px;
      font-weight: normal;
   }

   .chart-title {
      position: absolute;
      left: 78px;
      top: 3px;
      height: 21px;
      padding: 2px 3px;
      border: 1px solid #000;
      background: #b5ffff;
      box-shadow: 2px 2px 0 #6a9999;
      font-weight: bold;
      font-style: italic;
   }

   .bars {
      display: flex;
      align-items: flex-end;
      height: 168px;
      padding-left: 5px;
      border-bottom: 3px solid #000;
   }

   .bin {
      width: 55px;
      display: flex;
      flex-direction: column;
      line-height: 15px;
      text-align: center;
   }

   .hot {
      color: #d11;
   }

   .bar {
      margin-right: -1px;
      border: 1px solid #222;
      border-bottom: 0;
      background: #ff1a1a;
   }

   .ranges {
      display: flex;
      padding: 2px 0 0 5px;
   }

   .ranges div {
      width: 55px;
      height: 29px;
      display: flex;
      flex-direction: column;
      padding: 2px 0 0 8px;
      border: 1px solid #222;
      border-right-width: 0;
      background: #ff1a1a;
      color: #300;
      line-height: 15px;
   }

   .ranges div:last-child {
      border-right-width: 1px;
   }

   .ranges span + span {
      padding-left: 9px;
   }

   .scroll {
      display: flex;
      flex: none;
      background: #0003;
      border: 2px solid;
      border-color: #0006 #fff8 #fff8 #0006;
   }

   .scroll svg {
      width: 10px;
      height: 10px;
   }

   .arrow {
      fill: #fff3;
      stroke: #fffc;
   }

   .horiz {
      height: 14px;
   }

   .vert {
      width: 14px;
      flex-direction: column;
   }

   .track {
      flex: 1;
      display: flex;
      flex-direction: inherit;
   }

   .thumb {
      background: var(--teal);
      border: 2px solid;
      border-color: #fff8 #0006 #0006 #fff8;
   }

   .histogram .thumb {
      background: var(--light);
   }

   .options {
      flex: 1;
      display: flex;
      margin-top: 1px;
      border: 2px solid #000;
      background: #000;
   }

   .options > :global(*) {
      background-color: var(--light);
   }

   .list {
      display: flex;
      flex-direction: column;
      gap: 3px;
      overflow: hidden;
      padding: 3px 3px 3px 2px;
      border: 2px solid;
      border-color: var(--teal-lo) var(--teal-hi) var(--teal-hi) var(--teal-lo);
   }

   .list button {
      flex: none;
      height: 15px;
      line-height: 15px;
      text-align: left;
      white-space: pre;
      overflow: hidden;
   }

   .list .picked {
      background: #000;
      color: var(--teal);
   }

   .params {
      width: 75px;
      padding: 3px 3px 0;
      border-color: var(--light-lo) var(--light-hi) var(--light-hi) var(--light-lo);
   }

   .params .picked {
      color: var(--light);
   }

   .resolution {
      flex: 1;
      display: flex;
      flex-direction: column;
      margin-left: 1px;
      padding: 1px 3px 2px;
   }

   .resolution label {
      text-align: center;
   }

   .resolution output {
      flex: 1;
      padding: 6px 0 0 4px;
      line-height: 15px;
      font-weight: normal;
   }

   .resolution input {
      appearance: none;
      width: 100%;
      height: 15px;
      background: #82b7b8;
      border: 2px solid;
      border-color: var(--light-lo) var(--light-hi) var(--light-hi) var(--light-lo);
   }

   .resolution input::-webkit-slider-thumb {
      appearance: none;
      width: 30px;
      height: 11px;
      border: 2px solid;
      border-color: var(--light-hi) var(--light-lo) var(--light-lo) var(--light-hi);
      background: linear-gradient(90deg, var(--light) 46%, var(--light-lo) 46% 54%, var(--light) 54%);
   }

   .sash {
      display: flex;
      justify-content: flex-end;
      align-items: center;
      height: 12px;
      padding-right: 10px;
      background: linear-gradient(transparent 5px, var(--teal-lo) 5px 6px, var(--teal-hi) 6px 8px, transparent 8px);
   }

   .sash span {
      width: 10px;
      height: 10px;
      background: var(--teal);
      border: 2px solid;
      border-color: var(--teal-hi) var(--teal-lo) var(--teal-lo) var(--teal-hi);
   }

   .map {
      display: grid;
      place-items: center;
      height: 164px;
      margin: 0 6px 0 4px;
      border: 2px solid;
      border-color: var(--teal-lo) var(--teal-hi) var(--teal-hi) var(--teal-lo);
      outline: 1px solid #000;
      outline-offset: -3px;
   }

   .map svg {
      width: 78px;
      height: 122px;
   }

   .summary {
      display: flex;
      align-items: center;
      gap: 5px;
      padding: 0 4px 4px 5px;
      border-bottom: 1px solid #000;
   }

   .summary p {
      flex: 1;
      height: 42px;
      padding-left: 2px;
      margin-left: -3px;
      border: 1px solid #000;
      background: var(--light);
      line-height: 40px;
   }

   .summary .tag {
      height: 38px;
   }

   .tool.big {
      height: 37px;
      margin: 0;
   }

   .close-row {
      padding: 1px;
      background: var(--light);
   }

   .close-row .push {
      width: 100%;
      height: 25px;
   }

   .viewer h2 {
      height: 26px;
      margin: 1px;
      border: 2px solid;
      border-color: var(--teal-hi) var(--teal-lo) var(--teal-lo) var(--teal-hi);
      font: bold 14px/21px "Liberation Serif", serif;
      text-align: center;
   }

   .columns {
      display: flex;
      height: 630px;
      border-top: 2px solid #000;
      border-bottom: 1px solid #000;
   }

   .layers {
      display: flex;
      flex-direction: column;
      width: 171px;
      border-right: 2px solid #000;
   }

   .layer-head {
      display: flex;
      height: 29px;
      border-bottom: 1px solid #000;
      background: var(--light);
      font-style: italic;
   }

   .layer-head strong {
      flex: 1;
      border: 1px solid #000;
      border-width: 0 1px;
      text-align: center;
      line-height: 28px;
   }

   .layer-head .push {
      margin: 2px;
      width: 45px;
      font-weight: normal;
   }

   .layer-head .push:last-child {
      width: 36px;
   }

   .pane {
      flex: 1;
      display: flex;
      gap: 4px;
      min-height: 0;
      padding: 0 1px 1px 0;
   }

   .pane-main {
      flex: 1;
      display: flex;
      flex-direction: column;
      gap: 4px;
      min-width: 0;
   }

   .pane .list {
      flex: 1;
   }

   .layers .pane > :global(.vert) {
      margin-bottom: 20px;
   }

   .cats .pane > :global(.vert) {
      margin-bottom: 18px;
   }

   .option {
      position: relative;
      height: 28px;
      background: var(--light);
      border: 2px solid;
      border-color: var(--light-hi) var(--light-lo) var(--light-lo) var(--light-hi);
   }

   .option::after {
      content: "";
      position: absolute;
      right: 5px;
      top: calc(50% - 3px);
      box-sizing: border-box;
      width: 12px;
      height: 7px;
      border: 2px solid;
      border-color: var(--light-hi) var(--light-lo) var(--light-lo) var(--light-hi);
      pointer-events: none;
   }

   .option select {
      appearance: none;
      width: 100%;
      height: 100%;
      padding-left: 5px;
   }

   .option.teal {
      background: var(--teal);
      border-color: var(--teal-hi) var(--teal-lo) var(--teal-lo) var(--teal-hi);
      font-family: "Liberation Serif", serif;
   }

   .option.lime {
      width: 61px;
      background: #1ae81a;
      border-color: #7df57d #178a17 #178a17 #7df57d;
   }

   .replace {
      padding: 2px 1px 2px 5px;
      border-top: 1px solid #000;
   }

   .cats {
      flex: 1;
      display: flex;
      flex-direction: column;
      min-width: 0;
      padding-left: 1px;
   }

   .cat-head {
      display: flex;
      align-items: center;
      height: 30px;
      background: var(--light);
   }

   .cat-head .push {
      width: 207px;
      height: 28px;
      font-style: italic;
   }

   .cat-head label {
      flex: 1;
      padding-left: 1px;
   }

   .cat-head .option {
      width: 60px;
      margin-right: 2px;
   }

   .step-row {
      display: flex;
      align-items: center;
      gap: 4px;
      height: 27px;
   }

   .step-row .push {
      width: 44px;
      height: 23px;
      line-height: 18px;
   }

   .step-row .push:first-child {
      width: 54px;
   }

   .step-row input {
      flex: 1;
      min-width: 0;
      height: 27px;
      padding: 0 0 3px 6px;
      border: 2px solid #fff;
      box-shadow: inset 2px 2px 0 var(--teal-lo), inset -2px -2px 0 var(--teal-hi);
   }

   .zoom-row {
      display: flex;
      align-items: center;
      height: 33px;
   }

   .boxed {
      height: 33px;
      padding: 2px;
      border: 1px solid #000;
   }

   .boxed > .option {
      width: 117px;
      margin-left: 3px;
   }

   .boxed.sv {
      display: flex;
      padding: 0;
      border-left: 0;
      background: var(--light);
      line-height: 30px;
   }

   .swatch {
      padding: 1px 2px 0 5px;
      background: #1fd10f;
   }

   .check {
      display: flex;
      align-items: center;
      gap: 3px;
      padding: 0 0 5px 4px;
   }

   .check input {
      appearance: none;
      width: 13px;
      height: 13px;
      border: 1px solid;
      border-color: var(--teal-hi) var(--teal-lo) var(--teal-lo) var(--teal-hi);
   }

   .right-tags {
      justify-content: flex-end;
   }

   .info, .erf {
      height: 21px;
      border-bottom: 2px solid #000;
      line-height: 19px;
   }

   .info {
      text-align: center;
      border-top: 1px solid #000;
   }

   .erf {
      padding-left: 1px;
      border-bottom-width: 1px;
      background: var(--cream);
   }

   .viewer-foot {
      display: flex;
      gap: 4px;
      padding: 1px 2px;
      background: var(--light);
   }

   .viewer-foot .push {
      flex: 1;
      height: 31px;
   }

   .viewer-foot .tool {
      width: 30px;
      height: 31px;
      margin: 0;
   }

   .viewer-foot .icon {
      width: 23px;
      height: 23px;
   }
</style>
